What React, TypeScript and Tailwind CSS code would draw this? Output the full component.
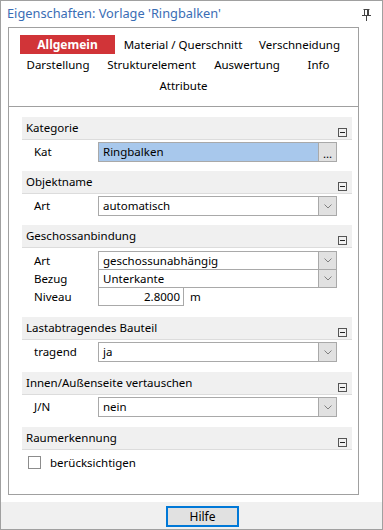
import React from "react";

const TABS_ROW_2 = [
  { label: "Darstellung", w: "w-[98px]" },
  { label: "Strukturelement", w: "w-[89px]" },
  { label: "Auswertung", w: "w-[102px]" },
  { label: "Info", w: "w-[41px]" },
];

function PinIcon() {
  return (
    <svg width="9" height="12" viewBox="0 0 9 12" className="mt-[2px]">
      <path d="M1.5 0.5h6" stroke="#444" strokeWidth="1" />
      <path d="M2.5 0.5v6M6.5 0.5v6M5.5 1v5.5" stroke="#444" strokeWidth="1" />
      <path d="M0 6.5h9" stroke="#444" strokeWidth="1" />
      <path d="M4.5 7v5" stroke="#444" strokeWidth="1" />
    </svg>
  );
}

function Chevron() {
  return (
    <svg width="8" height="5" viewBox="0 0 8 5">
      <path d="M0.5 0.5L4 4L7.5 0.5" fill="none" stroke="#808080" strokeWidth="1" />
    </svg>
  );
}

function SectionHeader({ title }: { title: string }) {
  return (
    <div className="relative flex h-[23px] items-center border-b border-[#dcdcdc] bg-[#f0f0f0] pl-[4px] pr-[5px]">
      <span className="mb-[1px] leading-[16px]">{title}</span>
      {/* collapse box sits in the lower right corner over the header */}
      <span className="absolute right-[5px] bottom-[2px] flex h-[9px] w-[9px] items-center justify-center border border-[#555]">
        <span className="h-px w-[5px] bg-[#222]" />
      </span>
    </div>
  );
}

function Row({
  label,
  children,
  stacked,
}: {
  label: string;
  children: React.ReactNode;
  stacked?: boolean;
}) {
  return (
    <div className={`flex items-stretch ${stacked ? "-mt-px" : ""}`}>
      <div className="flex w-[76px] items-center pl-[12px]">{label}</div>
      {children}
    </div>
  );
}

function Combo({ value, h = "h-[20px]" }: { value: string; h?: string }) {
  return (
    <div className={`flex ${h} w-[239px] border border-[#a9a9a9] bg-white`}>
      <div className="flex flex-1 items-center pl-[4px]">{value}</div>
      <div className="flex w-[18px] items-center justify-center border-l border-[#a9a9a9] bg-[#e1e1e1]">
        <Chevron />
      </div>
    </div>
  );
}

function Section({
  title,
  children,
  pb = "pb-[9px]",
}: {
  title: string;
  children: React.ReactNode;
  pb?: string;
}) {
  return (
    <div className="flex flex-col">
      <SectionHeader title={title} />
      <div className={`pt-[2px] ${pb}`}>{children}</div>
    </div>
  );
}

export default function App() {
  return (
    <div className="flex h-[530px] w-[383px] flex-col border border-[#a0a0a0] bg-white font-['Noto_Sans',sans-serif] text-[11.5px] text-black">
      <div className="flex h-[26px] items-center justify-between pl-[6px] pr-[11px]">
        <span className="text-[12.8px] text-[#3a6db5]">
          Eigenschaften: Vorlage 'Ringbalken'
        </span>
        <PinIcon />
      </div>

      <div className="flex flex-1 flex-col pl-[7px] pr-[23px] pb-[7px]">
        <div className="flex flex-1 flex-col border border-[#a0a0a0]">
          {/* Tabs */}
          <div className="flex h-[79px] flex-col border-b border-[#a0a0a0] pt-[7px]">
            <div className="flex h-[19px] items-center">
              <div className="ml-[11px] flex h-[19px] w-[95px] items-center justify-center bg-[#d13438] text-[12px] font-bold text-white">
                Allgemein
              </div>
              <div className="w-[136px] text-center">Material / Querschnitt</div>
              <div className="w-[97px] text-center">Verschneidung</div>
            </div>
            <div className="flex h-[21px] items-center">
              {TABS_ROW_2.map((t) => (
                <div key={t.label} className={`${t.w} text-center`}>
                  {t.label}
                </div>
              ))}
            </div>
            <div className="flex h-[21px] items-center justify-center">
              Attribute
            </div>
          </div>

          {/* Property grid */}
          <div className="ml-[13px] mr-[6px] flex flex-col pt-[10px]">
            <Section title="Kategorie">
              <Row label="Kat">
                <div className="flex h-[20px] w-[239px] border border-[#a9a9a9]">
                  <div className="flex flex-1 items-center bg-[#a8c8ec] pl-[4px]">
                    Ringbalken
                  </div>
                  <div className="flex w-[18px] items-end justify-center border-l border-[#a9a9a9] bg-[#e1e1e1] pb-[2px] leading-[10px]">
                    ...
                  </div>
                </div>
              </Row>
            </Section>

            <Section title="Objektname">
              <Row label="Art">
                <Combo value="automatisch" />
              </Row>
            </Section>

            <Section title="Geschossanbindung" pb="pb-[11px]">
              <div className="pt-[1px]">
                <Row label="Art">
                  <Combo value="geschossunabhängig" h="h-[19px]" />
                </Row>
                <Row label="Bezug" stacked>
                  <Combo value="Unterkante" h="h-[19px]" />
                </Row>
                <Row label="Niveau" stacked>
                  <div className="flex h-[19px] w-[86px] items-center justify-end border border-[#a9a9a9] pr-[3px]">
                    2.8000
                  </div>
                  <div className="flex items-center pl-[6px]">m</div>
                </Row>
              </div>
            </Section>

            <Section title="Lastabtragendes Bauteil" pb="pb-[10px]">
              <Row label="tragend">
                <Combo value="ja" />
              </Row>
            </Section>

            <Section title="Innen/Außenseite vertauschen" pb="pb-[10px]">
              <Row label="J/N">
                <Combo value="nein" />
              </Row>
            </Section>

            <div className="flex flex-col">
              <SectionHeader title="Raumerkennung" />
              <div className="flex items-center pt-[4px] pl-[6px]">
                <span className="h-[13px] w-[13px] border border-[#8c8c8c] bg-white" />
                <span className="pl-[9px]">berücksichtigen</span>
              </div>
            </div>
          </div>
        </div>
      </div>

      <div className="flex h-[27px] items-start bg-[#f0f0f0] pt-[4px]">
        <button
          type="button"
          className="ml-[165px] flex h-[21px] w-[73px] items-center justify-center border-2 border-[#0078d7] bg-[#e1e1e1] text-[12px]"
        >
          Hilfe
        </button>
      </div>
    </div>
  );
}
